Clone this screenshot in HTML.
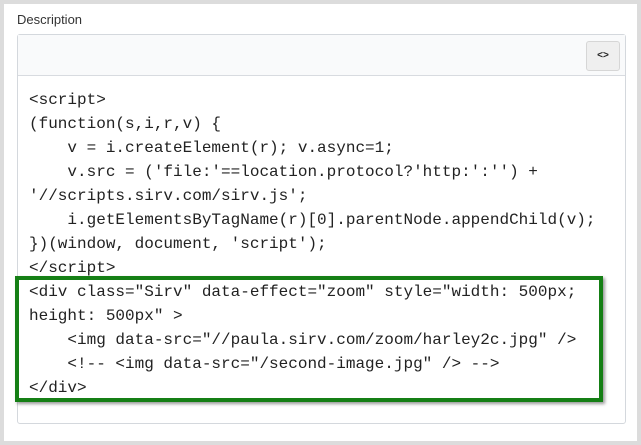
<!DOCTYPE html>
<html><head><style>
body{margin:0;width:641px;height:445px;background:#dcdcdc;position:relative;overflow:hidden;font-family:"Liberation Sans",sans-serif}
.panel{position:absolute;left:4px;top:4px;width:633px;height:437px;background:#fff}
.lbl{position:absolute;left:17px;top:12px;font-size:13px;color:#333}
.ed{position:absolute;left:17px;top:34px;width:607px;height:388px;border:1px solid #d4d8dd;border-radius:3px;background:#fff}
.tb{position:absolute;left:0;top:0;right:0;height:40px;background:#f9fafb;border-bottom:1px solid #d8dbe0}
.btn{position:absolute;left:568px;top:6px;width:32px;height:28px;background:#efefef;border:1px solid #d6d6d6;border-radius:3px;font-size:10px;font-weight:bold;text-align:center;line-height:28px;color:#222}
pre{position:absolute;left:11px;top:53px;margin:0;font-family:"Liberation Mono",monospace;font-size:16px;line-height:24px;color:#222}
.box{position:absolute;left:15px;top:276px;width:580px;height:118px;border:4px solid #157f15;box-shadow:2px 2px 3px rgba(0,0,0,.4)}
</style></head><body>
<div class="panel"></div>
<div class="lbl">Description</div>
<div class="ed"><div class="tb"><div class="btn">&lt;&gt;</div></div>
<pre>&lt;script&gt;
(function(s,i,r,v) {
    v = i.createElement(r); v.async=1;
    v.src = ('file:'==location.protocol?'http:':'') +
'//scripts.sirv.com/sirv.js';
    i.getElementsByTagName(r)[0].parentNode.appendChild(v);
})(window, document, 'script');
&lt;/script&gt;
&lt;div class="Sirv" data-effect="zoom" style="width: 500px;
height: 500px" &gt;
    &lt;img data-src="//paula.sirv.com/zoom/harley2c.jpg" /&gt;
    &lt;!-- &lt;img data-src="/second-image.jpg" /&gt; --&gt;
&lt;/div&gt;</pre>
</div>
<div class="box"></div>
</body></html>
